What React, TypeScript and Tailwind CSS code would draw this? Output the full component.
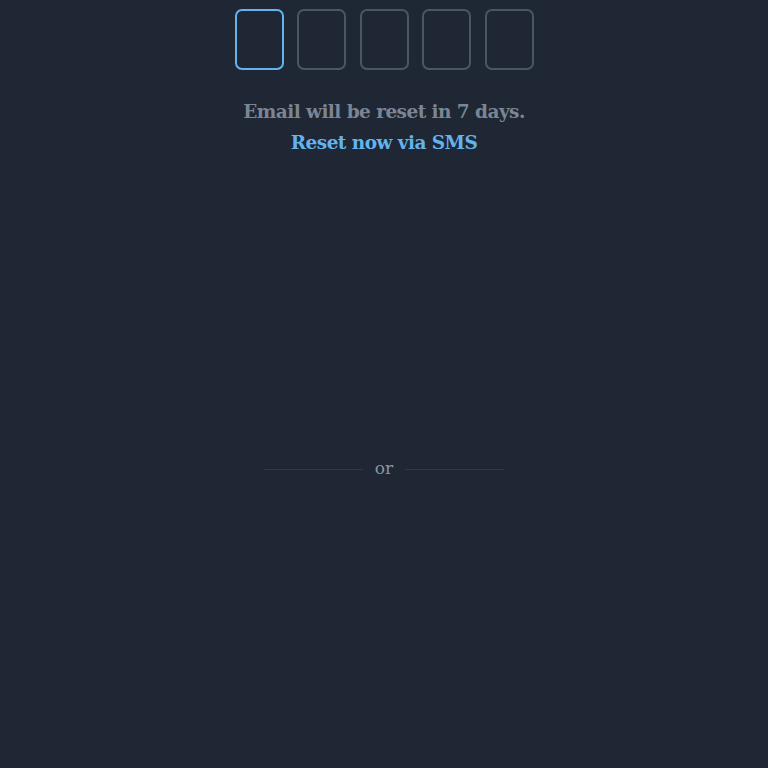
import React from "react";

export default function App() {
  const boxes = [0, 1, 2, 3, 4];
  return (
    <div
      className="w-[768px] h-[768px] bg-[#1e2733] flex flex-col items-center"
      style={{ fontFamily: '"DejaVu Serif", "Liberation Serif", serif' }}
    >
      <div className="flex gap-[13.5px] mt-[9px]">
        {boxes.map((i) => (
          <div
            key={i}
            className={
              i === 0
                ? "w-[49px] h-[61px] rounded-[7px] border-2 border-[#63b3ed]"
                : "w-[49px] h-[61px] rounded-[7px] border-2 border-[#4a5568]"
            }
          />
        ))}
      </div>
      <div className="mt-[26px] text-[18.5px] leading-[31px] font-bold text-[#7c8593] tracking-[-0.55px]">
        Email will be reset in 7 days.
      </div>
      <div className="text-[18.5px] leading-[31px] font-bold text-[#63b3ed] tracking-[-0.55px]">
        Reset now via SMS
      </div>
      <div className="mt-[302px] w-[240px] flex items-center gap-[12px]">
        <div className="flex-1 h-px bg-[#2f3947]" />
        <span className="text-[17px] text-[#8a94a3] leading-none pb-[2px]">or</span>
        <div className="flex-1 h-px bg-[#2f3947]" />
      </div>
    </div>
  );
}
